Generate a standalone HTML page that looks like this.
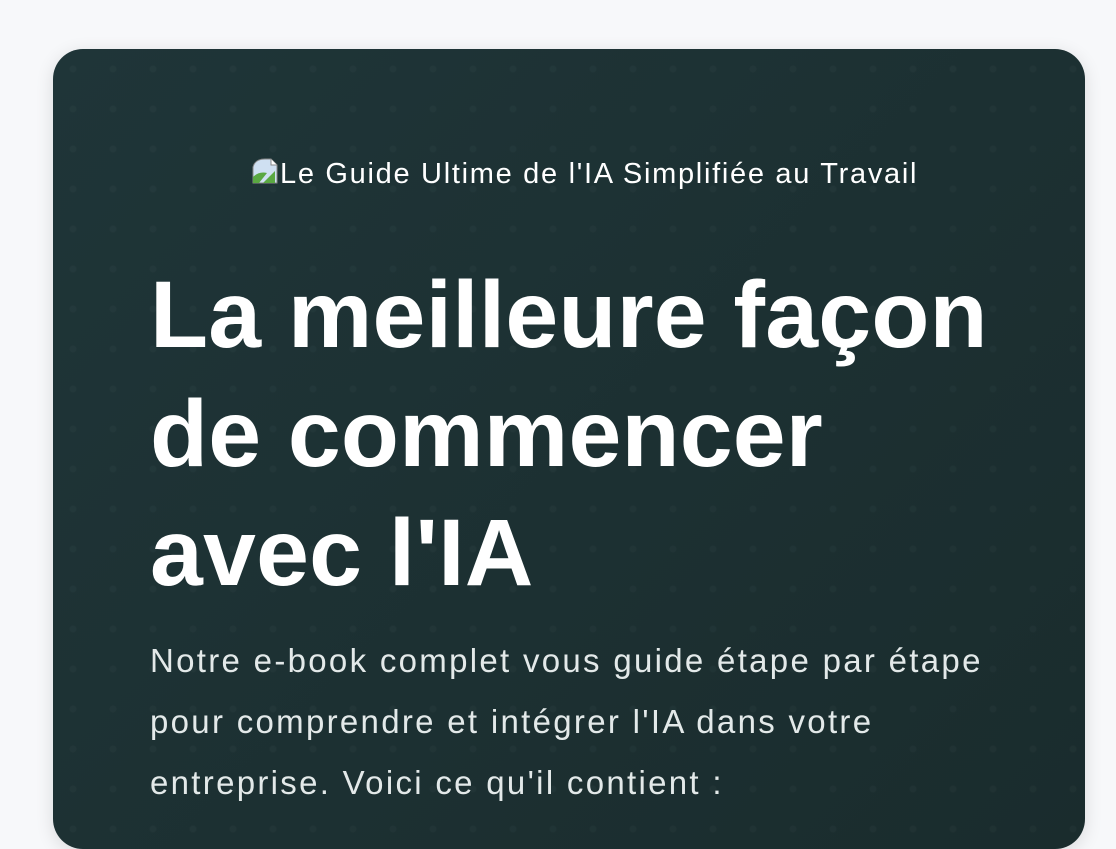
<!DOCTYPE html>
<html><head><meta charset="utf-8"><style>
html,body{margin:0;padding:0;background:#f7f8fa;width:1116px;height:808px;overflow:hidden;font-family:"Liberation Sans",sans-serif}
.card{position:absolute;left:53px;top:49px;width:1032px;height:800px;border-radius:30px;
background:radial-gradient(circle,rgba(255,255,255,0.025) 3px,transparent 4px) 0 0/40px 40px,linear-gradient(135deg,#1f3538,#1a2c2d);
box-shadow:0 4px 18px rgba(0,0,0,0.12)}
.img{position:absolute;left:251px;top:154px;color:#fff;font-size:29px;letter-spacing:1.7px;line-height:40px;white-space:nowrap}
.ic{display:inline-block;width:28px;height:28px;vertical-align:-2px;margin-right:1px}
h1{position:absolute;left:150px;top:256px;margin:0;color:#fff;font-size:95px;line-height:119px;font-weight:bold;letter-spacing:0.2px;white-space:nowrap}
p{position:absolute;left:150px;top:630px;margin:0;color:#e3e9e9;font-size:33px;letter-spacing:2.3px;line-height:61px;width:880px}
</style></head><body>
<div class="card"></div>
<div class="img"><svg class="ic" viewBox="0 0 28 28"><path d="M2 26V10Q4 2 14 2h6l6 6v18z" fill="#cfe0f2" stroke="#888" stroke-width="1"/><path d="M2 26v-6q6-6 14-4l-8 10z" fill="#5aa842"/><path d="M12 26l12-12v12z" fill="#5aa842"/><path d="M20 2v6h6" fill="#fff" stroke="#888"/></svg>Le Guide Ultime de l'IA Simplifiée au Travail</div>
<h1>La meilleure façon<br>de commencer<br>avec l'IA</h1>
<p>Notre e-book complet vous guide étape par étape pour comprendre et intégrer l'IA dans votre entreprise. Voici ce qu'il contient :</p>
</body></html>
